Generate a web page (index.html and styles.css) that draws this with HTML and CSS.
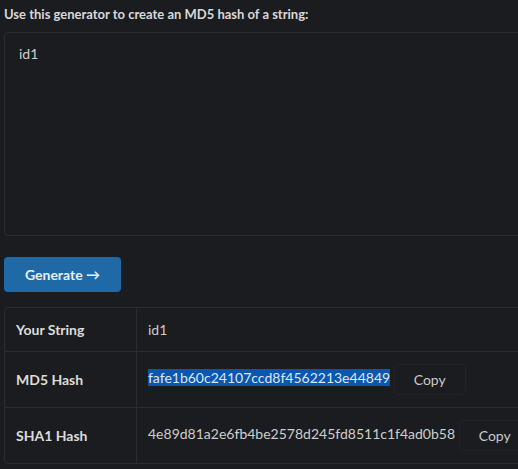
FILE: index.html
```html
<!DOCTYPE html>
<html>
<head>
<meta charset="utf-8">
<link rel="stylesheet" href="styles.css">
</head>
<body>
<main class="page">
  <label class="intro" for="src">Use this generator to create an MD5 hash of a string:</label>
  <textarea id="src" class="input">id1</textarea>
  <div class="actions">
    <button class="generate">Generate →</button>
  </div>
  <table class="results">
    <tr>
      <th>Your String</th>
      <td>id1</td>
    </tr>
    <tr class="tall">
      <th>MD5 Hash</th>
      <td><span class="selected">fafe1b60c24107ccd8f4562213e44849</span> <button class="copy">Copy</button></td>
    </tr>
    <tr class="tall">
      <th>SHA1 Hash</th>
      <td>4e89d81a2e6fb4be2578d245fd8511c1f4ad0b58 <button class="copy">Copy</button></td>
    </tr>
  </table>
</main>
</body>
</html>
```
FILE: styles.css
```css
html, body {
  margin: 0;
  padding: 0;
  background: #1b1c1f;
  overflow: hidden;
}
body {
  font-family: Lato, "Noto Sans", sans-serif;
  color: #d4d4d4;
  font-size: 13px;
}
.page {
  padding: 4px 0 0 4px;
  width: 560px;
  display: flex;
  flex-direction: column;
  align-items: flex-start;
}
.intro {
  font-weight: 700;
  font-size: 13px;
  line-height: 20px;
  height: 28px;
  color: #d8d8d8;
}
.input {
  box-sizing: border-box;
  width: 560px;
  height: 204px;
  margin: 0;
  background: #1b1c1f;
  border: 1px solid #2c2d31;
  border-radius: 4px;
  padding: 12px 14px;
  font-family: Lato, "Noto Sans", sans-serif;
  font-size: 14px;
  color: #cfcfcf;
  resize: none;
  outline: none;
}
.actions {
  margin-top: 21px;
}
.generate {
  width: 117px;
  height: 35px;
  background: #1e69a6;
  color: #e8eef4;
  border: none;
  border-radius: 4px;
  font-family: Lato, "Noto Sans", sans-serif;
  font-size: 14px;
  font-weight: 700;
  padding: 0;
}
.results {
  margin-top: 15px;
  width: 560px;
  border-collapse: separate;
  border-spacing: 0;
  border: 1px solid #2c2d31;
  border-radius: 4px;
}
.results th, .results td {
  text-align: left;
  padding: 12px 11px;
  line-height: 19px;
  font-size: 14px;
  vertical-align: middle;
}
.results th {
  width: 109px;
  font-weight: 700;
  color: #dcdcdc;
  border-right: 1px solid #2c2d31;
}
.results tr + tr th, .results tr + tr td {
  border-top: 1px solid #2c2d31;
}
.results tr.tall td, .results tr.tall th {
  height: 31px;
}
.results td {
  color: #cdcdcd;
  white-space: nowrap;
}
.selected {
  background: #0b56af;
  color: #dfe6ef;
}
.copy {
  height: 31px;
  padding: 0 19px;
  background: #1b1c1f;
  border: 1px solid #222326;
  border-radius: 4px;
  color: #c9c9c9;
  font-family: Lato, "Noto Sans", sans-serif;
  font-size: 14px;
  vertical-align: middle;
}
```
